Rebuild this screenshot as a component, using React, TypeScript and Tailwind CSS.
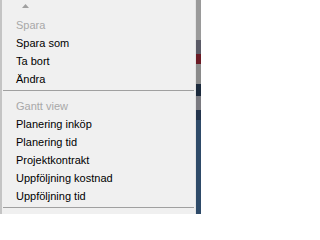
const saveItems = [
  { label: "Spara", disabled: true },
  { label: "Spara som" },
  { label: "Ta bort" },
  { label: "Ändra" },
];

const ganttItems = [
  { label: "Gantt view", disabled: true },
  { label: "Planering inköp" },
  { label: "Planering tid" },
  { label: "Projektkontrakt" },
  { label: "Uppföljning kostnad" },
  { label: "Uppföljning tid" },
];

type Item = { label: string; disabled?: boolean };

const MenuRow = ({ item }: { item: Item }) => (
  <div
    className={`h-[18px] flex items-center pl-[14px] ${
      item.disabled ? "text-[#a8a8a8]" : "text-black"
    }`}
  >
    {item.label}
  </div>
);

const Separator = () => (
  <div className="h-[9px] pt-[2px] pl-[1px] pr-[1px]">
    <div className="h-px bg-[#a0a0a0]" />
  </div>
);

export default function App() {
  return (
    <div className="w-[201px] h-[214px] flex overflow-hidden bg-[#f0f0f0] font-['Liberation_Sans',Arial,sans-serif] text-[11px] leading-none">
      {/* Menu */}
      <div className="w-[196px] h-full flex flex-col border-l-2 border-[#c4c4c4] border-r border-r-[#e4e4e4] bg-[#f0f0f0]">
        {/* scroll up arrow */}
        <div className="h-[16px] pl-[20px] pt-[4px]">
          <svg width="7" height="4" viewBox="0 0 7 4">
            <polygon points="0,4 7,4 3.5,0" fill="#a0a0a0" />
          </svg>
        </div>
        {saveItems.map((item) => (
          <MenuRow key={item.label} item={item} />
        ))}
        <Separator />
        {ganttItems.map((item) => (
          <MenuRow key={item.label} item={item} />
        ))}
        <Separator />
      </div>

      {/* Background window peeking out on the right */}
      <div className="flex-1 flex flex-col">
        <div className="h-[40px] bg-[#9a9a9a]" />
        <div className="h-[14px] bg-[#5a5a66]" />
        <div className="h-[10px] bg-[#6a1a24]" />
        <div className="h-[20px] bg-[#8a8a8a]" />
        <div className="h-[12px] bg-[#1c2a3c]" />
        <div className="h-[14px] bg-[#7a7a80]" />
        <div className="h-[10px] bg-[#23344c]" />
        <div className="flex-1 bg-[#2e4a68]" />
      </div>
    </div>
  );
}
